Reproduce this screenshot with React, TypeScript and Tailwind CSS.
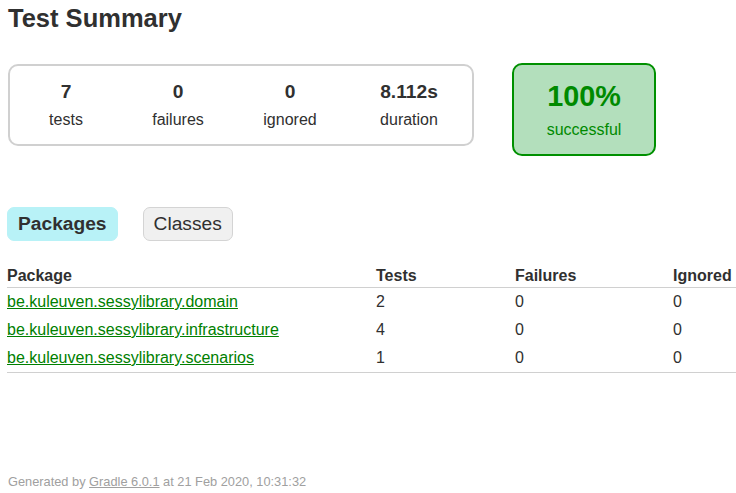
import React from "react";

const rows = [
  { name: "be.kuleuven.sessylibrary.domain", tests: 2, failures: 0, ignored: 0 },
  { name: "be.kuleuven.sessylibrary.infrastructure", tests: 4, failures: 0, ignored: 0 },
  { name: "be.kuleuven.sessylibrary.scenarios", tests: 1, failures: 0, ignored: 0 },
];

const stats = [
  { value: "7", label: "tests", w: "w-[112px]" },
  { value: "0", label: "failures", w: "w-[112px]" },
  { value: "0", label: "ignored", w: "w-[112px]" },
  { value: "8.112s", label: "duration", w: "w-[126px]" },
];

export default function App() {
  return (
    <div className="w-[736px] h-[493px] overflow-hidden bg-white text-[#303030] font-['Liberation_Sans',Arial,Helvetica,sans-serif] pl-[7px]">
      <h1 className="ml-px mt-[3px] text-[25.5px] font-bold leading-[30px]">Test Summary</h1>

      <div className="flex items-start mt-[30px]">
        <div className="ml-px mt-px flex border-2 border-[#d0d0d0] rounded-[10px]">
          {stats.map((s) => (
            <div key={s.label} className={`${s.w} pt-[15px] pb-[15px] text-center`}>
              <div className="text-[19.2px] font-bold leading-[22px] mb-[8px]">{s.value}</div>
              <div className="text-[16px] leading-[18px]">{s.label}</div>
            </div>
          ))}
        </div>
        <div className="ml-[38px] w-[144px] border-2 border-[#009000] bg-[#b3dfbc] rounded-[10px] pt-[15px] pb-[15px] text-center text-[#008a00]">
          <div className="text-[28.8px] font-bold leading-[33px] mb-[8px]">100%</div>
          <div className="text-[16px] leading-[18px]">successful</div>
        </div>
      </div>

      <ul className="flex gap-[25px] mt-[51px]">
        <li className="px-[10px] py-[5px] border border-[#b8f2f7] bg-[#b8f2f7] rounded-[7px] text-[19.2px] leading-[22px] font-bold">
          Packages
        </li>
        <li className="px-[10px] py-[5px] border border-[#d4d4d4] bg-[#f0f0f0] rounded-[7px] text-[19.2px] leading-[22px]">
          Classes
        </li>
      </ul>

      <table className="mt-[21px] table-fixed border-collapse w-[736px] text-[16px]">
        <colgroup>
          <col className="w-[369px]" />
          <col className="w-[139px]" />
          <col className="w-[158px]" />
          <col className="w-[70px]" />
        </colgroup>
        <thead>
          <tr className="border-b border-[#d0d0d0]">
            <th className="text-left font-bold pt-[5px] pb-[2px] leading-[18px]">Package</th>
            <th className="text-left font-bold pt-[5px] pb-[2px] leading-[18px]">Tests</th>
            <th className="text-left font-bold pt-[5px] pb-[2px] leading-[18px]">Failures</th>
            <th className="text-left font-bold pt-[5px] pb-[2px] leading-[18px]">Ignored</th>
          </tr>
        </thead>
        <tbody className="border-b border-[#d0d0d0]">
          {rows.map((r) => (
            <tr key={r.name}>
              <td className="pt-[5px] pb-[5px] leading-[18px]">
                <a href="#" className="text-[#008000] underline">{r.name}</a>
              </td>
              <td className="pt-[5px] pb-[5px] leading-[18px]">{r.tests}</td>
              <td className="pt-[5px] pb-[5px] leading-[18px]">{r.failures}</td>
              <td className="pt-[5px] pb-[5px] leading-[18px]">{r.ignored}</td>
            </tr>
          ))}
        </tbody>
      </table>

      <div className="ml-px mt-[101px] text-[12.8px] leading-[15px] text-[#a0a0a0]">
        Generated by <a href="#" className="underline text-[#a0a0a0]">Gradle 6.0.1</a> at 21 Feb 2020, 10:31:32
      </div>
    </div>
  );
}
